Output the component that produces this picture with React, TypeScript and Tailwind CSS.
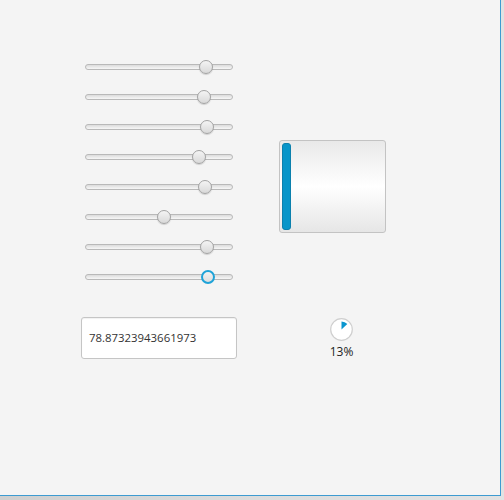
import React from "react";

// thumb centre, px from the left end of the track
const SLIDERS = [121, 119, 121.7, 114, 120, 79, 121.7, 122.7];

function Slider({ pos, focused }: { pos: number; focused?: boolean }) {
  return (
    <div className="relative flex h-[30px] w-[148px] items-center">
      <div className="h-[6px] w-full rounded-full border border-[#b9b9b9] bg-gradient-to-b from-[#dcdcdc] to-[#f7f7f7]" />
      <div
        className={
          focused
            ? "absolute top-[8px] h-[14px] w-[14px] rounded-full border-2 border-[#1fa3d8] bg-gradient-to-b from-[#f2f2f2] to-[#dedede]"
            : "absolute top-[8px] h-[14px] w-[14px] rounded-full border border-[#a3a3a3] bg-gradient-to-b from-[#f4f4f4] to-[#d9d9d9] shadow-[0_1px_1px_rgba(0,0,0,0.15)]"
        }
        style={{ left: pos - 7 }}
      />
    </div>
  );
}

function Pie({ pct }: { pct: number }) {
  const a = (pct / 100) * Math.PI * 2;
  const r = 8;
  const x = 11.5 + r * Math.sin(a);
  const y = 11.5 - r * Math.cos(a);
  return (
    <svg width="23" height="23" viewBox="0 0 23 23">
      <circle cx="11.5" cy="11.5" r="10.8" fill="#ffffff" stroke="#cfcfcf" strokeWidth="1.2" />
      <path d={`M11.5 11.5 L11.5 3.5 A8 8 0 0 1 ${x} ${y} Z`} fill="#0a96cf" />
    </svg>
  );
}

export default function App() {
  return (
    <div className="h-[500px] w-[504px] bg-gradient-to-r from-[#cfcfcf] via-[#dcdcdc] to-[#e2e2e2]">
      <div
        className="flex h-[496px] w-[501px] border-r border-b border-[#3d9bd1] bg-[#f4f4f4] pt-[52px] pl-[81px] text-[#333333]"
        style={{ fontFamily: '"Open Sans", "Noto Sans", sans-serif' }}
      >
        <div className="flex w-[156px] flex-col">
          <div className="flex flex-col pl-[4px]">
            {SLIDERS.map((p, i) => (
              <Slider key={i} pos={p} focused={i === SLIDERS.length - 1} />
            ))}
          </div>
          <div className="mt-[25px] flex h-[42px] w-[156px] items-center rounded-[3px] border border-[#c5c5c5] bg-white px-[7px] text-[11.4px] shadow-[inset_0_1px_1px_rgba(0,0,0,0.06)]">
            78.87323943661973
          </div>
        </div>

        <div className="ml-[42px] flex flex-col pt-[88px]">
          <div className="flex h-[93px] w-[107px] rounded-[3px] border border-[#c3c3c3] bg-gradient-to-b from-[#e9e9e9] via-[#ffffff] to-[#e6e6e6] py-[2px] pl-[2px]">
            <div className="w-[9px] rounded-[3px] border border-[#0b80ad] bg-[#0795c9]" />
          </div>
          <div className="mt-[85px] ml-[51px] flex w-[23px] flex-col items-center">
            <Pie pct={13} />
            <div className="mt-[3px] text-[12px] leading-[16px] text-[#222222]">13%</div>
          </div>
        </div>
      </div>
    </div>
  );
}
